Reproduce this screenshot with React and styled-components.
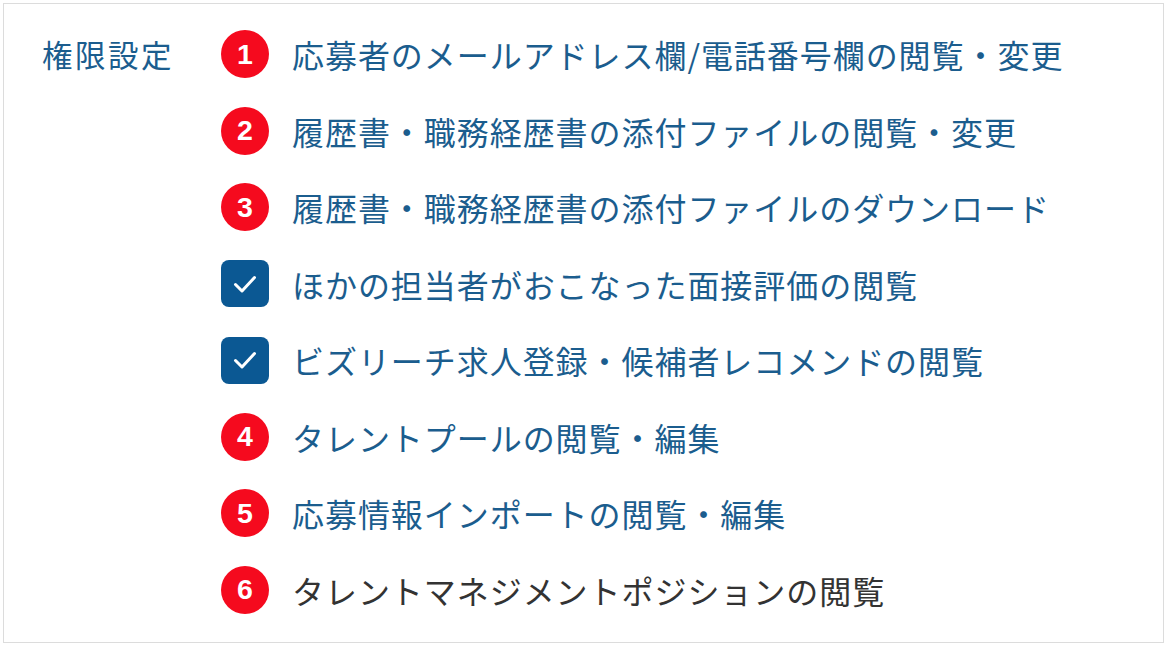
import React from "react";
import styled, { createGlobalStyle } from "styled-components";

const GlobalStyle = createGlobalStyle`
  html, body {
    margin: 0;
    padding: 0;
    background: #ffffff;
  }
  body {
    font-family: "Noto Sans CJK JP", "Noto Sans", sans-serif;
  }
`;

const Page = styled.div`
  padding: 3px;
`;

const Panel = styled.section`
  box-sizing: border-box;
  width: 1161px;
  height: 640px;
  border: 1px solid #dcdcdc;
  background: #fff;
  padding: 26px 38px 28px 38px;
  display: grid;
  grid-template-columns: 179px 1fr;
  align-items: start;
`;

const Label = styled.div`
  font-size: 30.5px;
  line-height: 48px;
  letter-spacing: 2.5px;
  color: #1b5d8e;
  white-space: nowrap;
`;

const List = styled.ul`
  list-style: none;
  margin: 0;
  padding: 0;
  display: flex;
  flex-direction: column;
  gap: 28.5px;
`;

const Row = styled.li`
  display: flex;
  align-items: center;
  gap: 23px;
  height: 48px;
`;

const Badge = styled.span`
  flex: none;
  width: 48px;
  height: 48px;
  border-radius: 50%;
  background: #f50a1e;
  color: #fff;
  display: flex;
  align-items: center;
  justify-content: center;
  font-family: "Liberation Sans", Arial, sans-serif;
  font-weight: 700;
  font-size: 28.5px;
`;

const Check = styled.span`
  flex: none;
  width: 48px;
  height: 47px;
  border-radius: 8px;
  background: #0b5893;
  display: flex;
  align-items: center;
  justify-content: center;
`;

const Text = styled.span`
  font-size: 32px;
  line-height: 48px;
  letter-spacing: 0.95px;
  white-space: nowrap;
  color: ${(p) => (p.$muted ? "#333333" : "#1b5d8e")};
`;

const items = [
  { mark: 1, text: "応募者のメールアドレス欄/電話番号欄の閲覧・変更" },
  { mark: 2, text: "履歴書・職務経歴書の添付ファイルの閲覧・変更" },
  { mark: 3, text: "履歴書・職務経歴書の添付ファイルのダウンロード" },
  { mark: "check", text: "ほかの担当者がおこなった面接評価の閲覧" },
  { mark: "check", text: "ビズリーチ求人登録・候補者レコメンドの閲覧" },
  { mark: 4, text: "タレントプールの閲覧・編集" },
  { mark: 5, text: "応募情報インポートの閲覧・編集" },
  { mark: 6, text: "タレントマネジメントポジションの閲覧", muted: true },
];

// White tick drawn inside the checked box
function CheckIcon() {
  return (
    <svg width="26" height="22" viewBox="0 0 26 22" fill="none">
      <path
        d="M3.5 11.5 L10 18 L22.5 4.5"
        stroke="#fff"
        strokeWidth="3"
        strokeLinecap="round"
        strokeLinejoin="round"
      />
    </svg>
  );
}

export default function App() {
  return (
    <Page>
      <GlobalStyle />
      <Panel>
        <Label>権限設定</Label>
        <List>
          {items.map((it, i) => (
            <Row key={i}>
              {it.mark === "check" ? (
                <Check>
                  <CheckIcon />
                </Check>
              ) : (
                <Badge>{it.mark}</Badge>
              )}
              <Text $muted={it.muted}>{it.text}</Text>
            </Row>
          ))}
        </List>
      </Panel>
    </Page>
  );
}
